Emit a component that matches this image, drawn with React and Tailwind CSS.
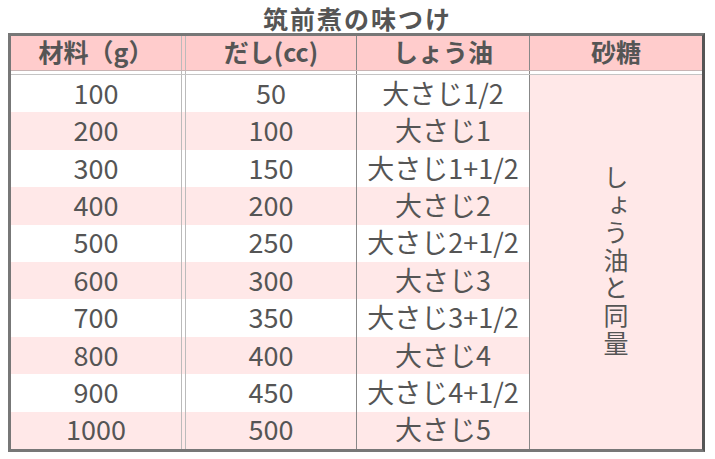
const rows = [
  ['100', '50', '大さじ1/2'],
  ['200', '100', '大さじ1'],
  ['300', '150', '大さじ1+1/2'],
  ['400', '200', '大さじ2'],
  ['500', '250', '大さじ2+1/2'],
  ['600', '300', '大さじ3'],
  ['700', '350', '大さじ3+1/2'],
  ['800', '400', '大さじ4'],
  ['900', '450', '大さじ4+1/2'],
  ['1000', '500', '大さじ5'],
];

const font = { fontFamily: '"Noto Sans CJK JP", "Noto Sans", sans-serif' };

// one row of the first three columns, with the double line between col 1 and 2
const Cells = ({ a, b, c, className = '' }) => (
  <div className={`flex ${className}`}>
    <div className="w-[171px] border-r border-[#bbb] flex items-center justify-center pb-[3px]">{a}</div>
    <div className="w-[3px]" />
    <div className="w-[172px] border-l border-r border-l-[#bbb] border-r-[#888] flex items-center justify-center pb-[3px]">{b}</div>
    <div className="w-[173px] border-r border-[#888] flex items-center justify-center pb-[3px]">{c}</div>
  </div>
);

export default function App() {
  return (
    <div className="w-[715px] h-[459px] bg-white text-[#555]" style={font}>
      <div className="h-[33px] pt-[3px] text-center text-[25px] font-bold leading-[30px] tracking-[2px]">
        筑前煮の味つけ
      </div>
      <div className="mx-[8px] w-[697px] border-[3px] border-[#777] border-r-[#555] flex flex-col">
        {/* header */}
        <div className="flex h-[35px] bg-[#ffcccc] border-b border-[#c8b4b4] text-[25px] font-bold leading-none">
          <Cells a="材料（g）" b="だし(cc)" c="しょう油" className="h-full" />
          <div className="flex-1 flex items-center justify-center pb-[3px]">砂糖</div>
        </div>
        <div className="flex h-[3px] bg-white">
          <Cells className="h-full" />
        </div>
        {/* body */}
        <div className="flex h-[375px] border-t border-[#c4c4c4] text-[27px] leading-none">
          <div className="flex flex-col">
            {rows.map((r, i) => (
              <Cells
                key={r[0]}
                a={r[0]}
                b={r[1]}
                c={r[2]}
                className={`flex-1 ${i % 2 === 1 ? 'bg-[#ffe8e8]' : 'bg-white'}`}
              />
            ))}
          </div>
          <div className="flex-1 bg-[#ffe8e8] flex items-center justify-center">
            <div className="[writing-mode:vertical-rl] [text-orientation:upright] text-[25px] leading-[28px] tracking-[2.6px]">
              しょう油と同量
            </div>
          </div>
        </div>
      </div>
    </div>
  );
}
